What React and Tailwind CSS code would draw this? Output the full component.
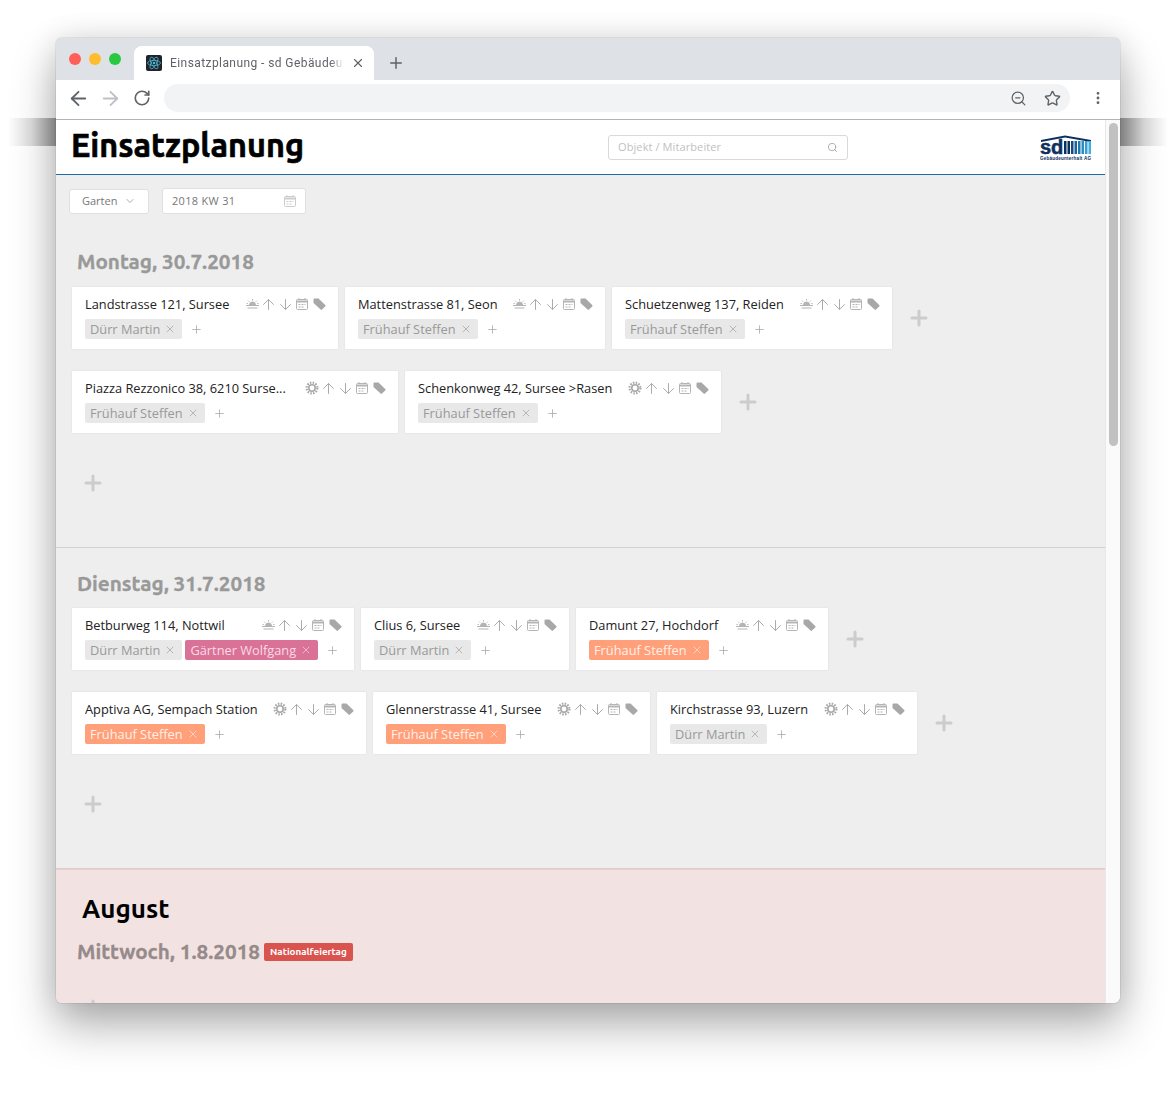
import React from "react";
import { ArrowLeft, ArrowRight, RotateCw, Plus, X, Star, ZoomOut, EllipsisVertical, ChevronDown, Search, ArrowUp, ArrowDown } from "lucide-react";

const ubuntu = "font-['Ubuntu','Noto_Sans','Open_Sans',sans-serif]";

const days = [
  {
    title: "Montag, 30.7.2018",
    sec: "h-[323px] pt-[24px]",
    top: "mt-[12px]",
    rows: [
      [
        { name: "Landstrasse 121, Sursee", w: "w-[266px]", icon: "rise", chips: [{ n: "Dürr Martin" }] },
        { name: "Mattenstrasse 81, Seon", w: "w-[260px]", icon: "rise", chips: [{ n: "Frühauf Steffen" }] },
        { name: "Schuetzenweg 137, Reiden", w: "w-[280px]", icon: "rise", chips: [{ n: "Frühauf Steffen" }] },
      ],
      [
        { name: "Piazza Rezzonico 38, 6210 Surse...", w: "w-[326px]", icon: "sun", chips: [{ n: "Frühauf Steffen" }] },
        { name: "Schenkonweg 42, Sursee >Rasen", w: "w-[316px]", icon: "sun", chips: [{ n: "Frühauf Steffen" }] },
      ],
    ],
  },
  {
    title: "Dienstag, 31.7.2018",
    sec: "h-[321px] pt-[23px]",
    top: "mt-[11px]",
    rows: [
      [
        { name: "Betburweg 114, Nottwil", w: "w-[282px]", icon: "rise", chips: [{ n: "Dürr Martin" }, { n: "Gärtner Wolfgang", c: "pink" }] },
        { name: "Clius 6, Sursee", w: "w-[208px]", icon: "rise", chips: [{ n: "Dürr Martin" }] },
        { name: "Damunt 27, Hochdorf", w: "w-[252px]", icon: "rise", chips: [{ n: "Frühauf Steffen", c: "orange" }] },
      ],
      [
        { name: "Apptiva AG, Sempach Station", w: "w-[294px]", icon: "sun", chips: [{ n: "Frühauf Steffen", c: "orange" }] },
        { name: "Glennerstrasse 41, Sursee", w: "w-[277px]", icon: "sun", chips: [{ n: "Frühauf Steffen", c: "orange" }] },
        { name: "Kirchstrasse 93, Luzern", w: "w-[260px]", icon: "sun", chips: [{ n: "Dürr Martin" }] },
      ],
    ],
  },
];

const chipStyles = {
  grey: "bg-[#e8e8e8] text-[#999999]",
  pink: "bg-[#da7196] text-[#f8dbe5]",
  orange: "bg-[#ffa07a] text-[#fff0e9]",
};

const SunRise = () => (
  <svg width="13" height="10" viewBox="0 0 13 10" fill="none" stroke="#b4b4b4" strokeWidth="1">
    <path d="M3.5 6a3 3 0 0 1 6 0" fill="#b4b4b4" />
    <path d="M0 6.5h13M1.5 9h10M6.5 0v1.5M2.2 1.7l1 1M10.8 1.7l-1 1M0.5 4.5h1.3M11.2 4.5h1.3" />
  </svg>
);

const SunGear = () => (
  <svg width="14" height="14" viewBox="0 0 14 14" fill="none" stroke="#a8a8a8">
    <circle cx="7" cy="7" r="3.2" strokeWidth="1.6" />
    <circle cx="7" cy="7" r="5.4" strokeWidth="2.2" strokeDasharray="1.5 1.33" />
  </svg>
);

const Cal = ({ className = "text-[#b4b4b4]" }) => (
  <svg width="12" height="12" viewBox="0 0 12 12" fill="none" stroke="currentColor" strokeWidth="1" className={className}>
    <rect x="0.5" y="1.5" width="11" height="10" rx="1" />
    <path d="M0.5 3.5h11" strokeWidth="2" />
    <path d="M3 0v2M9 0v2M2.5 6.5h2M5.5 6.5h2M8.5 6.5h1M2.5 9h2M5.5 9h2" />
  </svg>
);

const Tag = () => (
  <svg width="13" height="12" viewBox="0 0 13 12" fill="#a8a8a8">
    <path d="M0.5 1.5A1 1 0 0 1 1.5 0.5H5.5L12.2 7a1 1 0 0 1 0 1.4L9 11.6a1 1 0 0 1-1.4 0L0.5 5Z" />
  </svg>
);

const Chip = ({ n, c = "grey" }) => (
  <span className={`flex h-[20px] items-center gap-[4px] rounded-[2px] pl-[5px] pr-[6px] text-[12.8px] leading-none ${chipStyles[c]}`}>
    {n}
    <X size={12} strokeWidth={1.25} />
  </span>
);

const Card = ({ card }) => (
  <div className={`${card.w} h-[62px] shrink-0 rounded-[1px] bg-white pl-[13px] pr-[12px] pt-[8px] shadow-[0_0_2px_rgba(0,0,0,0.1)]`}>
    <div className="flex h-[18px] items-center">
      <span className="flex-1 truncate text-[12.8px] leading-[18px] text-[#222222]">{card.name}</span>
      <div className="flex items-center">
        {card.icon === "rise" ? <SunRise /> : <SunGear />}
        <ArrowUp size={17} strokeWidth={1.4} className="ml-[1px] text-[#aaaaaa]" />
        <ArrowDown size={17} strokeWidth={1.4} className="text-[#aaaaaa]" />
        <span className="ml-[2px] flex"><Cal /></span>
        <span className="ml-[5px] flex"><Tag /></span>
      </div>
    </div>
    <div className="mt-[6px] flex items-center gap-[3px]">
      {card.chips.map((c) => (
        <Chip key={c.n} {...c} />
      ))}
      <Plus size={13} strokeWidth={1.5} className="ml-[5px] text-[#aaaaaa]" />
    </div>
  </div>
);

const BigPlus = ({ className }) => (
  <Plus size={24} strokeWidth={3} className={`shrink-0 text-[#cccccc] ${className}`} />
);

const Day = ({ day }) => (
  <section className={`${day.sec} border-b border-[#d2d2d2] pl-[16px]`}>
    <h2 className={`${ubuntu} pl-[5px] text-[20.7px] font-bold leading-[26px] text-[#999999] [-webkit-text-stroke:0.3px_#999999]`}>{day.title}</h2>
    <div className={`${day.top} flex flex-col gap-[22px]`}>
      {day.rows.map((row, i) => (
        <div key={i} className="flex items-center gap-[7px]">
          {row.map((c) => (
            <Card key={c.name} card={c} />
          ))}
          <BigPlus className="ml-[8px]" />
        </div>
      ))}
    </div>
    <BigPlus className="ml-[9px] mt-[38px]" />
  </section>
);

const Logo = () => (
  <svg width="52" height="25" viewBox="0 0 52 25">
    <path d="M1 5 L25 0.5 L51 5 L51 7 L25 2.5 L1 7 Z" fill="#0d2f5e" />
    <text x="0" y="18.5" fontFamily="Liberation Sans, sans-serif" fontWeight="700" fontSize="20" stroke="#0d2f5e" strokeWidth="0.5" fill="#0d2f5e">sd</text>
    <rect x="24" y="6" width="2.5" height="13" fill="#0d2f5e" />
    <rect x="27.5" y="6" width="2.5" height="13" fill="#0d2f5e" />
    <rect x="31" y="6" width="2.5" height="13" fill="#164b80" />
    <rect x="34.5" y="6" width="2.5" height="13" fill="#1c6397" />
    <rect x="38" y="6" width="2.5" height="13" fill="#2078ad" />
    <rect x="41.5" y="6" width="2.5" height="13" fill="#2a8cc2" />
    <rect x="45" y="6" width="2.5" height="13" fill="#349fd4" />
    <rect x="48.5" y="6" width="2.5" height="13" fill="#3fb0e0" />
    <text x="0" y="24.5" fontFamily="Liberation Sans, sans-serif" fontWeight="700" fontSize="4.6" fill="#0d2f5e" textLength="51">Gebäudeunterhalt AG</text>
  </svg>
);

const Favicon = () => (
  <svg width="16" height="16" viewBox="0 0 16 16" className="shrink-0">
    <rect width="16" height="16" rx="2" fill="#20232a" />
    <g fill="none" stroke="#4fb6d4" strokeWidth="0.8">
      <ellipse cx="8" cy="8" rx="6.5" ry="2.6" />
      <ellipse cx="8" cy="8" rx="6.5" ry="2.6" transform="rotate(60 8 8)" />
      <ellipse cx="8" cy="8" rx="6.5" ry="2.6" transform="rotate(120 8 8)" />
    </g>
    <circle cx="8" cy="8" r="1.3" fill="#4fb6d4" />
  </svg>
);

export default function App() {
  return (
    <div className="relative h-[1105px] w-[1176px] overflow-hidden bg-white pl-[56px] pt-[38px] font-['Open_Sans','Noto_Sans',sans-serif]">
      {/* band behind the window */}
      <div className="absolute left-[8px] top-[118px] h-[28px] w-[48px] bg-gradient-to-r from-transparent via-[#dddddd] to-[#a0a0a0]" />
      <div className="absolute left-[1120px] top-[118px] h-[28px] w-[48px] bg-gradient-to-l from-transparent via-[#dddddd] to-[#a0a0a0]" />

      <div className="relative h-[965px] w-[1064px] overflow-hidden rounded-[6px] bg-white shadow-[0_0_1px_rgba(0,0,0,0.6),0_22px_45px_rgba(0,0,0,0.32),0_0_30px_rgba(0,0,0,0.1)]">
        {/* tab strip */}
        <div className="flex h-[42px] items-end bg-[#dee1e6] pl-[13px]">
          <div className="mb-[15px] flex gap-[8px]">
            <span className="h-[12px] w-[12px] rounded-full bg-[#ff5f57]" />
            <span className="h-[12px] w-[12px] rounded-full bg-[#ffbd2e]" />
            <span className="h-[12px] w-[12px] rounded-full bg-[#28c940]" />
          </div>
          <div className="ml-[13px] flex h-[34px] w-[240px] items-center rounded-t-[8px] bg-white pl-[12px] pr-[9px] font-['Roboto',sans-serif]">
            <Favicon />
            <span className="ml-[8px] flex-1 overflow-hidden whitespace-nowrap text-[12px] tracking-[0.42px] text-[#5f6368] [mask-image:linear-gradient(to_right,black_92%,transparent)]">Einsatzplanung - sd Gebäudeunterhalt</span>
            <X size={14} strokeWidth={2} className="ml-[7px] text-[#5f6368]" />
          </div>
          <Plus size={18} strokeWidth={2} className="mb-[8px] ml-[13px] text-[#5f6368]" />
        </div>

        {/* toolbar */}
        <div className="flex h-[40px] items-center border-b border-[#b4b4b4] pb-[3px] pl-[11px]">
          <ArrowLeft size={23} strokeWidth={1.9} className="text-[#5f6368]" />
          <ArrowRight size={23} strokeWidth={1.9} className="ml-[9px] text-[#bdc1c6]" />
          <RotateCw size={18} strokeWidth={2.2} className="ml-[11px] text-[#5f6368]" />
          <div className="ml-[13px] flex h-[28px] w-[906px] items-center justify-end rounded-full bg-[#f1f3f4] pr-[9px]">
            <ZoomOut size={17} strokeWidth={1.75} className="text-[#5f6368]" />
            <Star size={17} strokeWidth={2} className="ml-[17px] text-[#5f6368]" />
          </div>
          <EllipsisVertical size={16} strokeWidth={2.25} className="ml-[20px] text-[#5f6368]" />
        </div>

        {/* page */}
        <div className="flex h-[883px]">
          <div className="flex w-[1049px] flex-col overflow-hidden bg-[#eeeeee]">
            <header className="flex h-[55px] shrink-0 items-center border-b border-[#1f6aa5] bg-white pl-[15px] pr-[13px]">
              <h1 className={`${ubuntu} -mt-[3px] w-[232px] shrink-0 whitespace-nowrap text-[32.4px] font-bold leading-none text-black [-webkit-text-stroke:0.6px_black]`}>Einsatzplanung</h1>
              <div className="ml-[305px] flex h-[25px] w-[240px] items-center justify-between rounded-[3px] border border-[#d9d9d9] bg-white pl-[9px] pr-[9px] text-[11px] tracking-[0.1px] text-[#bfbfbf]">
                Objekt / Mitarbeiter
                <Search size={11} strokeWidth={1.5} className="text-[#8c8c8c]" />
              </div>
              <div className="ml-auto flex">
                <Logo />
              </div>
            </header>

            <div className="ml-[13px] mt-[13px] flex shrink-0 items-center gap-[13px] text-[11px] text-[#777777]">
              <div className="flex h-[25px] w-[80px] items-center justify-between rounded-[3px] border border-[#e0e0e0] bg-white pl-[12px] pr-[12px]">
                Garten
                <ChevronDown size={12} strokeWidth={1.5} className="text-[#8c8c8c]" />
              </div>
              <div className="flex h-[26px] w-[144px] items-center justify-between rounded-[3px] border border-[#e0e0e0] bg-white pl-[9px] pr-[9px] tracking-[0.3px]">
                2018 KW 31
                <Cal className="text-[#cccccc]" />
              </div>
            </div>

            <div className="mt-[11px] shrink-0">
              {days.map((d) => (
                <Day key={d.title} day={d} />
              ))}
            </div>

            <section className="flex-1 border-t border-[#f5cccc] bg-[#f2e3e2] pl-[16px] pt-[24px]">
              <h2 className={`${ubuntu} pl-[10px] text-[26px] font-bold leading-[30px] text-black`}>August</h2>
              <div className="mt-[15px] flex items-center">
                <h2 className={`${ubuntu} pl-[5px] text-[20.7px] font-bold leading-[26px] text-[#968a8a] [-webkit-text-stroke:0.3px_#968a8a]`}>Mittwoch, 1.8.2018</h2>
                <span className={`${ubuntu} ml-[4px] flex h-[18px] items-center rounded-[2px] bg-[#d9534f] px-[6px] text-[9.8px] font-bold text-white`}>Nationalfeiertag</span>
              </div>
              <BigPlus className="ml-[9px] mt-[31px]" />
            </section>
          </div>
          <div className="w-[15px] border-l border-[#e8e8e8] bg-[#fafafa] pl-[3px] pt-[3px]">
            <div className="h-[323px] w-[9px] rounded-full bg-[#c1c1c1]" />
          </div>
        </div>
      </div>
    </div>
  );
}
